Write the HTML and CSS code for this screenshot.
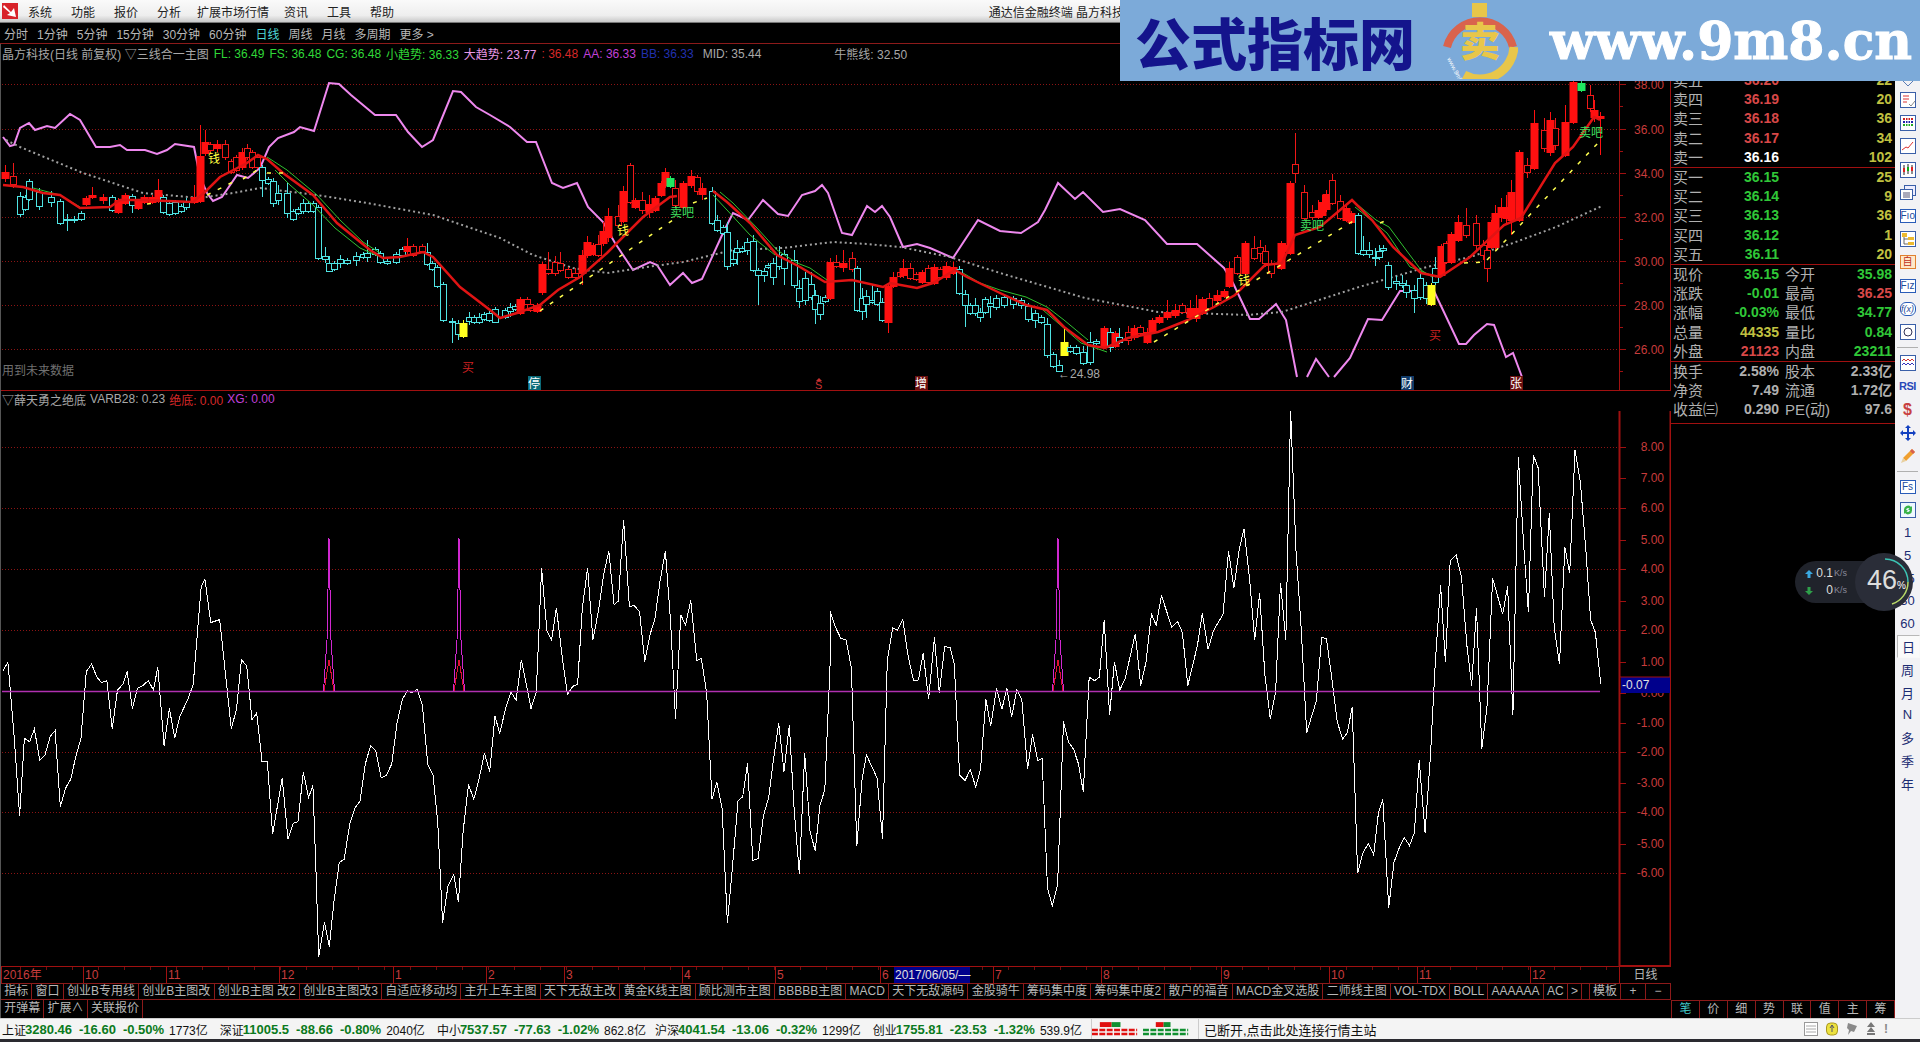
FILE: index.html
```html
<!DOCTYPE html>
<html lang="zh-CN">
<head>
    <meta charset="UTF-8">
    <title>通达信金融终端 晶方科技</title>
    <link rel="stylesheet" href="styles.css">
</head>
<body>
    <header class="menubar">
        <svg class="app-logo" viewBox="0 0 16 16">
            <rect width="16" height="16" fill="#d8232a"/>
            <path d="M2 2 L9 9 L12 5 L14 14 L5 12 L8 10 L1 4 Z" fill="#fff"/>
        </svg>
        <span>系统</span><span>功能</span><span>报价</span><span>分析</span><span class="menu-long">扩展市场行情</span><span>资讯</span><span>工具</span><span>帮助</span>
        <span class="app-title">通达信金融终端 晶方科技</span>
    </header>

    <nav class="periods">
        <span>分时</span><span>1分钟</span><span>5分钟</span><span>15分钟</span><span>30分钟</span><span>60分钟</span><span class="on">日线</span><span>周线</span><span>月线</span><span>多周期</span><span>更多 &gt;</span>
    </nav>

    <div class="workspace">
        <div class="left">
            <section class="pane pane-top">
                <div class="info">
                    <span class="grey">晶方科技(日线 前复权) ▽三线合一主图</span>
                    <span class="green">FL: 36.49</span>
                    <span class="green">FS: 36.48</span>
                    <span class="green">CG: 36.48</span>
                    <span class="green">小趋势: 36.33</span>
                    <span class="pink">大趋势: 23.77</span>
                    <span class="red">: 36.48</span>
                    <span class="violet">AA: 36.33</span>
                    <span class="blue">BB: 36.33</span>
                    <span class="grey mid">MID: 35.44</span>
                    <span class="grey far">牛熊线: 32.50</span>
                </div>
                <svg id="priceChart" class="chart" viewBox="0 63 1671 328" width="1671" height="328"></svg>
            </section>
            <section class="pane pane-bottom">
                <div class="info">
                    <span class="grey">▽薛天勇之绝底</span>
                    <span class="grey">VARB28: 0.23</span>
                    <span class="red">绝底: 0.00</span>
                    <span class="violet">XG: 0.00</span>
                </div>
                <svg id="indicatorChart" class="chart" viewBox="0 411 1671 556" width="1671" height="556"></svg>
            </section>
            <div class="date-row">
                <svg id="dateAxis" viewBox="0 967 1620 16" width="1620" height="16"></svg>
                <div class="date-cell">日线</div>
            </div>
            <div class="tabs">
                <span>指标</span><span>窗口</span><span>创业B专用线</span><span>创业B主图改</span><span>创业B主图 改2</span><span>创业B主图改3</span><span>自适应移动均</span><span>主升上车主图</span><span>天下无敌主改</span><span>黄金K线主图</span><span>顾比测市主图</span><span>BBBBB主图</span><span>MACD</span><span>天下无敌源码</span><span>金股骑牛</span><span>筹码集中度</span><span>筹码集中度2</span><span>散户的福音</span><span>MACD金叉选股</span><span>二师线主图</span><span>VOL-TDX</span><span>BOLL</span><span>AAAAAA</span><span>AC</span><span>&gt;</span>
                <span class="tab-push">模板</span><span class="tab-small">+</span><span class="tab-small">−</span>
            </div>
            <div class="tabs tabs-sub">
                <span>开弹幕</span><span>扩展∧</span><span>关联报价</span>
            </div>
        </div>

        <aside class="quote">
            <div class="q-block q-first">
                <div class="q-row"><b class="lab">卖五</b><i class="red">36.20</i><em class="yel">22</em></div>
                <div class="q-row"><b class="lab">卖四</b><i class="red">36.19</i><em class="yel">20</em></div>
                <div class="q-row"><b class="lab">卖三</b><i class="red">36.18</i><em class="yel">36</em></div>
                <div class="q-row"><b class="lab">卖二</b><i class="red">36.17</i><em class="yel">34</em></div>
                <div class="q-row"><b class="lab">卖一</b><i class="white">36.16</i><em class="yel">102</em></div>
            </div>
            <div class="q-block">
                <div class="q-row"><b class="lab">买一</b><i class="grn">36.15</i><em class="yel">25</em></div>
                <div class="q-row"><b class="lab">买二</b><i class="grn">36.14</i><em class="yel">9</em></div>
                <div class="q-row"><b class="lab">买三</b><i class="grn">36.13</i><em class="yel">36</em></div>
                <div class="q-row"><b class="lab">买四</b><i class="grn">36.12</i><em class="yel">1</em></div>
                <div class="q-row"><b class="lab">买五</b><i class="grn">36.11</i><em class="yel">20</em></div>
            </div>
            <div class="q-block">
                <div class="q-row"><b class="lab">现价</b><i class="grn">36.15</i><b class="lab2">今开</b><em class="grn">35.98</em></div>
                <div class="q-row"><b class="lab">涨跌</b><i class="grn">-0.01</i><b class="lab2">最高</b><em class="red">36.25</em></div>
                <div class="q-row"><b class="lab">涨幅</b><i class="grn">-0.03%</i><b class="lab2">最低</b><em class="grn">34.77</em></div>
                <div class="q-row"><b class="lab">总量</b><i class="yel">44335</i><b class="lab2">量比</b><em class="grn">0.84</em></div>
                <div class="q-row"><b class="lab">外盘</b><i class="red">21123</i><b class="lab2">内盘</b><em class="grn">23211</em></div>
            </div>
            <div class="q-block q-last">
                <div class="q-row"><b class="lab">换手</b><i class="sil">2.58%</i><b class="lab2">股本</b><em class="sil">2.33亿</em></div>
                <div class="q-row"><b class="lab">净资</b><i class="sil">7.49</i><b class="lab2">流通</b><em class="sil">1.72亿</em></div>
                <div class="q-row"><b class="lab">收益㈢</b><i class="sil">0.290</i><b class="lab2">PE(动)</b><em class="sil">97.6</em></div>
            </div>
            <div class="q-tabs">
                <span class="on">笔</span><span>价</span><span>细</span><span>势</span><span>联</span><span>值</span><span>主</span><span>筹</span>
            </div>
        </aside>

        <aside class="sidebar">
            <div class="side-top"><svg viewBox="0 0 16 10" width="16" height="10"><path d="M1 1 L8 8 L15 1" fill="none" stroke="#5b7db5"/></svg></div>
            <div class="side-item"><svg viewBox="0 0 16 16"><rect x=".5" y=".5" width="15" height="15" fill="#fff" stroke="#3a5fa8"/><path d="M3 4h6M3 7h6M3 10h4" stroke="#d33"/><path d="M9 12l2 2 4-5" fill="none" stroke="#888"/></svg></div>
            <div class="side-item"><svg viewBox="0 0 16 16"><rect x=".5" y=".5" width="15" height="15" fill="#fff" stroke="#3a5fa8"/><path d="M3 3h10v2H3z" fill="#c22"/><path d="M3 6h10v2H3z" fill="#22a"/><path d="M3 9h10v2H3z" fill="#2a2"/><path d="M5.500 3v9M8 3v9M10.500 3v9" stroke="#fff"/></svg></div>
            <div class="side-item"><svg viewBox="0 0 16 16"><rect x=".5" y=".5" width="15" height="15" fill="#fff" stroke="#3a5fa8"/><path d="M2 12l4-3 2 1 5-6" fill="none" stroke="#d33"/></svg></div>
            <div class="side-item"><svg viewBox="0 0 16 16"><rect x=".5" y=".5" width="15" height="15" fill="#fff" stroke="#3a5fa8"/><path d="M4 3v10M8 2v10M12 3v9" stroke="#222"/><path d="M3 6h2v4H3zM11 5h2v4h-2z" fill="#d22"/><path d="M7 5h2v4H7z" fill="#1a1"/></svg></div>
            <div class="side-item"><svg viewBox="0 0 16 16"><rect x="4.500" y=".5" width="11" height="10" fill="#eef" stroke="#3a5fa8"/><rect x=".5" y="4.500" width="12" height="10" fill="#fff" stroke="#3a5fa8"/><path d="M3 8h7M3 10h7M3 12h7" stroke="#557"/></svg></div>
            <div class="side-item"><span class="side-box">Fıo</span></div>
            <div class="side-item"><svg viewBox="0 0 16 16"><rect x=".5" y=".5" width="15" height="15" fill="#fff" stroke="#3a5fa8"/><rect x="2" y="2" width="5" height="4" fill="#ecb92e"/><rect x="8" y="6" width="6" height="3" fill="#ecb92e"/><rect x="8" y="11" width="6" height="3" fill="#ecb92e"/><path d="M4 6v7h4M4 8h4" fill="none" stroke="#666"/></svg></div>
            <div class="side-item"><span class="side-box side-self">自</span></div>
            <div class="side-item"><span class="side-box">Fız</span></div>
            <div class="side-item"><span class="side-box side-fx">f(x)</span></div>
            <div class="side-item"><svg viewBox="0 0 16 16"><rect x=".5" y=".5" width="15" height="15" fill="#fff" stroke="#3a5fa8"/><circle cx="8" cy="8" r="4" fill="none" stroke="#335"/></svg></div>
            <div class="side-sep"></div>
            <div class="side-item"><svg viewBox="0 0 16 16"><rect x=".5" y=".5" width="15" height="15" fill="#fff" stroke="#3a5fa8"/><path d="M2 6l2-2 2 2 2-2 2 2 2-2 2 2" fill="none" stroke="#c33"/><path d="M2 10l2-2 2 2 2-2 2 2 2-2 2 2" fill="none" stroke="#33b"/></svg></div>
            <div class="side-item"><span class="side-rsi">RSI</span></div>
            <div class="side-item"><span class="side-dollar">$</span></div>
            <div class="side-item"><svg viewBox="0 0 16 16"><path d="M8 0l3 3H9v4h4V5l3 3-3 3V9H9v4h2l-3 3-3-3h2V9H3v2L0 8l3-3v2h4V3H5z" fill="#1340c0"/></svg></div>
            <div class="side-item"><svg viewBox="0 0 16 16"><path d="M12 1l3 3-9 9-3-3z" fill="#f0a030"/><path d="M3 10l3 3-5 2z" fill="#e8d0a0"/><path d="M12 1l3 3-2 2-3-3z" fill="#d86050"/></svg></div>
            <div class="side-sep"></div>
            <div class="side-item tight"><span class="side-box">Fs</span></div>
            <div class="side-item tight"><svg viewBox="0 0 16 16"><rect x=".5" y=".5" width="15" height="15" fill="#eef8ff" stroke="#3a5fa8"/><path d="M4 8a4 4 0 0 1 7-3l1-1v4H8l1.500-1.500A2.500 2.500 0 0 0 6 8zM12 8a4 4 0 0 1-7 3l-1 1V8h4l-1.500 1.500A2.500 2.500 0 0 0 10 8z" fill="#39b34a"/></svg></div>
            <div class="side-item tight">1</div>
            <div class="side-item tight">5</div>
            <div class="side-item tight">15</div>
            <div class="side-item tight">30</div>
            <div class="side-item tight">60</div>
            <div class="side-item tight side-active">日</div>
            <div class="side-item tight">周</div>
            <div class="side-item tight">月</div>
            <div class="side-item tight">N</div>
            <div class="side-item tight">多</div>
            <div class="side-item tight">季</div>
            <div class="side-item tight">年</div>
        </aside>
    </div>

    <footer class="statusbar">
        <div class="st-group"><span>上证</span><b>3280.46</b><b>-16.60</b><b>-0.50%</b><span class="st-amt">1773亿</span></div>
        <div class="st-group"><span>深证</span><b>11005.5</b><b>-88.66</b><b>-0.80%</b><span class="st-amt">2040亿</span></div>
        <div class="st-group st-tight"><span>中小</span><b>7537.57</b><b>-77.63</b><b>-1.02%</b><span class="st-amt">862.8亿</span></div>
        <div class="st-group"><span>沪深</span><b>4041.54</b><b>-13.06</b><b>-0.32%</b><span class="st-amt">1299亿</span></div>
        <div class="st-group"><span>创业</span><b>1755.81</b><b>-23.53</b><b>-1.32%</b><span class="st-amt">539.9亿</span></div>
        <svg class="st-bars" viewBox="0 0 108 20" width="108" height="20">
            <rect x="8" y="3" width="12" height="5" fill="#e01010"/><rect x="20" y="3" width="9" height="5" fill="#109030"/>
            <path d="M0 11h46M0 15h46" stroke="#e01010" stroke-width="2.500" stroke-dasharray="6 1.500"/>
            <rect x="65" y="3" width="8" height="5" fill="#e01010"/><rect x="73" y="3" width="7" height="5" fill="#109030"/>
            <path d="M52 11h46M52 15h46" stroke="#109030" stroke-width="2.500" stroke-dasharray="6 1.500"/>
        </svg>
        <span class="st-msg">已断开,点击此处连接行情主站</span>
        <div class="st-icons">
            <svg viewBox="0 0 14 14" width="14" height="14"><rect x=".5" y=".5" width="13" height="13" fill="#fff" stroke="#999"/><path d="M2 4h10M2 7h10M2 10h10" stroke="#aaa"/></svg>
            <svg viewBox="0 0 12 14" width="12" height="14"><rect x=".5" y="1" width="11" height="12" rx="4" fill="#ece240" stroke="#aa9820"/><path d="M6 3v7M4 6l2-3 2 3" fill="none" stroke="#556"/></svg>
            <svg viewBox="0 0 12 14" width="12" height="14"><path d="M2 1l9 3-3 6-3-1-3 4 1-5-2-2z" fill="#8a8a8a"/></svg>
            <svg viewBox="0 0 10 14" width="10" height="14"><path d="M5 0l4 5H1zM5 5l4 5H1z" fill="#777"/><rect x="1" y="11" width="8" height="2" fill="#777"/></svg>
            <span class="st-bang">!</span>
        </div>
    </footer>
    <div class="bottom-edge"></div>

    <!-- watermark strip sits over the top of the window -->
    <div class="banner">
        <span class="banner-cn">公式指标网</span>
        <svg class="banner-logo" viewBox="0 0 76 76" width="76" height="76">
            <path d="M5 44 A34 34 0 0 1 71 44" fill="none" stroke="#d9634d" stroke-width="8"/>
            <path d="M72 44 A34 34 0 0 1 22 72" fill="none" stroke="#e8c64a" stroke-width="9"/>
            <rect x="30" y="0" width="15" height="14" fill="#e8c64a"/>
            <text x="38" y="53" class="banner-glyph">卖</text>
            <text x="5" y="56" class="banner-tiny" transform="rotate(62 5 56)">www.9m8.cn</text>
        </svg>
        <span class="banner-url">www.9m8.cn</span>
    </div>

    <!-- floating net speed widget -->
    <div class="speed">
        <div class="speed-row"><svg viewBox="0 0 8 8" width="8" height="8"><path d="M4 0l4 4H5.500v4h-3V4H0z" fill="#3aa8e0"/></svg><b>0.1</b><small>K/s</small></div>
        <div class="speed-row"><svg viewBox="0 0 8 8" width="8" height="8"><path d="M4 8L0 4h2.500V0h3v4H8z" fill="#2ea04a"/></svg><b>0</b><small>K/s</small></div>
        <div class="speed-dial">
            <svg viewBox="0 0 58 58" width="58" height="58">
                <path d="M30 6 A23 23 0 0 1 53 29" fill="none" stroke="#3cc4b4" stroke-width="1.500"/>
                <path d="M53 29 A23 23 0 0 1 37 51" fill="none" stroke="#b8d868" stroke-width="1.500"/>
            </svg>
            <span class="speed-num">46<small>%</small></span>
        </div>
    </div>

    <script src="chart.js"></script>
</body>
</html>
```

FILE: styles.css
```css
* {
    margin: 0;
    padding: 0;
    box-sizing: border-box;
}

body {
    width: 1920px;
    height: 1042px;
    overflow: hidden;
    background: #000;
    display: flex;
    flex-direction: column;
    position: relative;
    font-family: "Liberation Sans", "Noto Sans CJK SC", sans-serif;
    font-size: 12px;
    color: #b8b8b8;
}

/* top menu */
.menubar {
    height: 23px;
    flex: none;
    display: flex;
    align-items: center;
    gap: 19px;
    padding-left: 2px;
    background: linear-gradient(#fafafa, #eeeeee 70%, #c8c8c8);
    color: #222;
    border-bottom: 1px solid #777;
}

.app-logo {
    width: 16px;
    height: 16px;
    margin-right: -9px;
}

.menu-long {
    margin: 0 -4px 0 -3px;
}

.app-title {
    margin-left: auto;
    padding-right: 796px;
}

.periods {
    height: 21px;
    flex: none;
    display: flex;
    align-items: center;
    gap: 9px;
    padding-left: 4px;
    border-bottom: 1px solid #8c1a1a;
}

.periods .on {
    color: #4fd8d8;
}

/* main area */
.workspace {
    height: 974px;
    flex: none;
    display: flex;
}

.left {
    width: 1671px;
    flex: none;
    display: flex;
    flex-direction: column;
    border-left: 1px solid #555;
}

.pane {
    flex: none;
    overflow: hidden;
}

.pane-top {
    height: 347px;
    border-bottom: 1px solid #a01010;
}

.pane-bottom {
    height: 576px;
}

.info {
    height: 19px;
    display: flex;
    align-items: center;
    gap: 5px;
    padding-left: 1px;
    white-space: nowrap;
}

.pane-bottom .info {
    height: 20px;
    gap: 4px;
    padding: 0 0 4px 1px;
}

.info .mid {
    margin-left: 4px;
}

.info .far {
    margin-left: 68px;
}

.grey { color: #a8a8a8; }
.green { color: #30d838; }
.pink { color: #e898e8; }
.red { color: #d62828; }
.violet { color: #c040d8; }
.blue { color: #2030b0; }

.chart {
    display: block;
    margin-left: -1px;
}

/* jagged lines like the real terminal */
#indicatorChart polyline {
    shape-rendering: crispEdges;
}

/* date axis and tab rows */
.date-row {
    height: 16px;
    flex: none;
    display: flex;
    margin-left: -1px;
}

.date-row svg {
    display: block;
}

.date-cell {
    width: 51px;
    text-align: center;
    line-height: 16px;
}

.tabs {
    height: 17px;
    flex: none;
    display: flex;
    border-top: 1px solid #8c1a1a;
    border-bottom: 1px solid #8c1a1a;
    line-height: 15px;
    white-space: nowrap;
}

.tabs span {
    padding: 0 3.2px;
    border-right: 1px solid #8c1a1a;
}

.tabs .tab-push {
    margin-left: auto;
    border-left: 1px solid #8c1a1a;
    padding: 0 3px;
}

.tabs .tab-small {
    width: 25px;
    padding: 0;
    text-align: center;
}

.tabs-sub {
    height: 18px;
    border-top: none;
    border-bottom: none;
    line-height: 17px;
}

/* order book */
.quote {
    width: 224px;
    flex: none;
    display: flex;
    flex-direction: column;
}

.q-block {
    height: 97px;
    flex: none;
    border-bottom: 1px solid #a01010;
}

.q-first {
    margin-top: 27px;
}

.q-last {
    height: 62px;
}

.q-row {
    height: 19.2px;
    display: grid;
    grid-template-columns: 44px 62px 50px 1fr;
    padding: 0 3px 0 2px;
    align-items: center;
    line-height: 19px;
    white-space: nowrap;
}

.q-row b.lab,
.q-row b.lab2 {
    font-weight: 400;
    font-size: 15px;
    color: #b0b0b0;
}

.q-row b.lab2 {
    padding-left: 6px;
}

.q-row i,
.q-row em {
    font-style: normal;
    font-weight: 700;
    font-size: 14px;
    text-align: right;
}

.q-row em {
    grid-column: 4;
}

.q-row .red { color: #d84848; }
.q-row .grn { color: #30c838; }
.q-row .yel { color: #c0c040; }
.q-row .white { color: #fff; }
.q-row .sil { color: #b0b0b0; }

.q-tabs {
    margin-top: auto;
    height: 18px;
    display: flex;
    border-top: 1px solid #8c1a1a;
    border-left: 1px solid #8c1a1a;
}

.q-tabs span {
    width: 28px;
    text-align: center;
    line-height: 17px;
    border-right: 1px solid #8c1a1a;
}

.q-tabs .on {
    color: #40c8c8;
}

/* right toolbar */
.sidebar {
    width: 25px;
    flex: none;
    padding-top: 34px;
    background: #f2f2f5;
    color: #1c2c72;
    font-size: 13px;
}

.side-top {
    height: 10.5px;
    text-align: center;
    line-height: 0;
}

.side-item {
    height: 23.2px;
    display: flex;
    align-items: center;
    justify-content: center;
}

.side-item.tight {
    height: 22.8px;
}

.side-item svg {
    width: 16px;
    height: 16px;
}

.side-sep {
    height: 1px;
    margin: 3px 2px 4px;
    background: #b0b0b0;
}

.side-box {
    width: 16px;
    height: 14px;
    border: 1px solid #2a5cb8;
    background: #fff;
    font-size: 10px;
    line-height: 12px;
    text-align: center;
    color: #1d4a9c;
}

.side-self {
    background: #ffe8c8;
    border-color: #e08030;
    color: #c03020;
}

.side-fx {
    border-radius: 6px;
    font-style: italic;
    font-size: 9px;
}

.side-rsi {
    font-size: 11px;
    font-weight: 700;
    color: #2848b8;
    letter-spacing: -0.5px;
}

.side-dollar {
    font-size: 16px;
    font-weight: 700;
    color: #c84040;
}

.side-active {
    border: 1px solid #b8b8b8;
    border-right-color: #f8f8f8;
    border-bottom-color: #f8f8f8;
    background: #fafafa;
    margin-left: 2px;
}

/* status bar */
.statusbar {
    height: 21px;
    flex: none;
    display: flex;
    align-items: center;
    background: #f4f4f4;
    border-top: 1px solid #ccc;
    color: #111;
    padding-left: 2px;
    white-space: nowrap;
}

.st-group {
    display: flex;
    align-items: center;
    gap: 7px;
    margin-right: 12px;
}

.st-tight {
    margin-right: 9px;
}

.st-group span:first-child {
    margin-right: -8px;
}

.st-group b {
    font-size: 13px;
    color: #0a7a20;
}

.st-group .st-amt {
    margin-left: -2px;
    font-size: 12px;
}

.st-bars {
    flex: none;
    margin-left: -3px;
    padding: 0;
    border-left: 1px solid #ccc;
    border-right: 1px solid #ccc;
}

.st-msg {
    margin-left: 5px;
    font-size: 13px;
}

.st-icons {
    margin-left: auto;
    margin-right: 32px;
    display: flex;
    align-items: center;
    gap: 8px;
}

.st-bang {
    font-weight: 700;
    color: #888;
}

.bottom-edge {
    height: 3px;
    flex: none;
    background: #2a2a30;
}

/* watermark strip */
.banner {
    position: absolute;
    left: 1120px;
    top: 0;
    width: 800px;
    height: 81px;
    background: #7caad9;
    display: flex;
    align-items: center;
}

.banner-cn {
    margin-left: 15px;
    width: 307px;
    font-family: "Noto Sans CJK SC", sans-serif;
    font-size: 56px;
    font-weight: 900;
    line-height: 1;
    color: #14148c;
    white-space: nowrap;
}

.banner-logo {
    flex: none;
}

.banner-glyph {
    font-family: "Noto Sans CJK SC", sans-serif;
    font-size: 40px;
    font-weight: 900;
    fill: #e8c64a;
    text-anchor: middle;
}

.banner-tiny {
    font-size: 6px;
    fill: #fff;
}

.banner-url {
    margin-left: 32px;
    font-family: "DejaVu Serif", serif;
    font-size: 52px;
    font-weight: 700;
    -webkit-text-stroke: 1px #fff;
    color: #fff;
    white-space: nowrap;
}

/* net speed widget */
.speed {
    position: absolute;
    left: 1795px;
    top: 561px;
    width: 90px;
    height: 42px;
    padding: 4px 0 0 10px;
    border-radius: 21px;
    background: #20232b;
    color: #ddd;
    font-size: 10px;
}

.speed-row {
    display: grid;
    grid-template-columns: 9px 20px 1fr;
    height: 17px;
    line-height: 17px;
    align-items: center;
}

.speed-row b {
    font-weight: 400;
    font-size: 12px;
    text-align: right;
    padding-right: 1px;
}

.speed-row small {
    font-size: 9px;
    color: #889;
}

.speed-dial {
    position: absolute;
    left: 60px;
    top: -8px;
    width: 58px;
    height: 58px;
    border-radius: 50%;
    background: #2a2d38;
}

.speed-dial svg {
    position: absolute;
    left: 0;
    top: 0;
}

.speed-num {
    position: absolute;
    left: 12px;
    top: 11px;
    font-size: 27px;
    font-weight: 400;
    line-height: 32px;
    color: #ddd;
}

.speed-num small {
    font-size: 10px;
    color: #fff;
}
```

FILE: chart.js
```js
// x, body top, body bottom, type, wick top, wick bottom (all page pixels)
// R solid red, H hollow red, C hollow cyan, Y yellow, G green
const candles = [
    [5,172,178,'R',165,182],[13,176,184,'H',163,188],[20,196,214,'C',192,217],[25,197,209,'C'],[29,181,199,'C'],[39,192,206,'C',188,210],[51,197,202,'C',191,207],[60,201,223,'C'],[67,219,220,'C',214,231],[74,219,220,'C',216,223],[81,213,219,'C'],
    [86,198,204,'R'],[92,195,197,'R',187,199],[103,197,200,'R',194,204],[112,197,210,'C'],[118,200,212,'R'],[125,195,203,'R'],[132,196,205,'C',194,213],[138,201,208,'R'],[144,197,202,'R'],[152,197,202,'R'],[158,190,201,'R',179,203],
    [163,197,212,'C'],[169,203,214,'C'],[175,202,213,'C'],[181,206,211,'C'],[186,202,207,'C',198,210],[194,197,202,'R',185,204],[200,156,201,'R',125,203],[205,142,153,'R',130,156],[210,144,150,'H'],[217,144,148,'R',140,152],[225,144,157,'H',140,160],[231,161,172,'H'],[236,157,170,'H'],[242,152,167,'R',148,170],[247,148,157,'H',144,160],[252,152,167,'H'],[257,157,167,'H'],
    [262,167,180,'C',165,197],[268,179,183,'C'],[273,181,203,'C',178,207],[278,193,200,'C',185,205],[287,193,213,'C',183,218],[293,211,219,'C'],[298,209,213,'C'],[303,203,211,'C',199,214],[308,203,211,'C'],[313,203,211,'C'],[318,207,258,'C'],[325,256,259,'C',247,263],[329,263,271,'C',256,272],[334,263,269,'C'],[340,259,263,'C',255,268],[347,260,263,'C'],[356,256,260,'C',252,266],[363,254,257,'C'],[367,253,257,'C',240,262],[375,249,254,'C'],[380,253,262,'C'],[387,261,263,'C',258,265],[396,254,262,'C'],[402,249,255,'C'],
    [407,246,251,'R',238,254],[413,246,255,'H'],[422,246,251,'H'],[427,252,264,'C',243,266],[432,263,269,'C'],[437,267,286,'C'],[443,284,320,'C'],[452,321,322,'C',318,343],[458,323,334,'C',320,340],[463,323,336,'Y',320,338],[469,317,321,'C',312,325],[474,317,322,'C'],[479,317,322,'C',313,324],[484,314,319,'C'],[489,313,320,'C'],[495,309,322,'C',307,323],
    [505,310,317,'C'],[510,307,311,'C',303,317],[515,306,309,'C'],[520,299,313,'R'],[527,299,304,'H'],[530,304,310,'H'],[537,305,311,'R'],[542,264,292,'R',262,295],[548,269,273,'H',252,275],[555,262,273,'H',256,276],[560,263,270,'H',252,272],[568,269,277,'H'],[575,273,277,'H',268,280],[582,255,273,'R',250,285],[587,242,255,'R',236,258],[593,245,254,'R'],[598,244,255,'H',235,257],[603,231,243,'R',222,246],[608,216,237,'R',208,242],[618,216,225,'H',205,228],[623,191,221,'R',186,223],[630,165,202,'H'],[635,200,207,'R'],[642,200,210,'H',192,214],[649,204,212,'R',195,218],[655,198,210,'R'],[661,183,195,'R'],[665,172,185,'R',168,188],[670,178,186,'G'],[675,188,205,'H',180,208],[683,183,207,'R'],[691,176,185,'R',170,188],[697,177,191,'H',175,195],[702,188,194,'R',183,200],
    [712,191,223,'C',187,225],[717,220,230,'C',215,232],[723,227,233,'C'],[727,232,266,'C',222,270],[733,259,263,'C',250,266],[737,248,252,'C',240,265],[742,248,251,'C'],[747,242,250,'C',238,255],[753,241,270,'C',235,272],[758,270,275,'C',268,305],[764,271,275,'C',268,282],[768,265,267,'C'],[773,263,277,'C',258,285],[779,255,266,'C',246,270],[784,254,268,'C',250,285],[794,260,285,'C',250,288],[799,288,301,'C',280,308],[805,278,300,'C',272,305],[811,284,297,'C',272,300],[815,295,309,'C',290,324],[820,303,314,'C',296,320],[825,297,301,'C'],
    [830,262,298,'R',258,300],[836,262,266,'H',255,268],[843,263,267,'R',250,272],[852,258,269,'H',252,272],[857,268,310,'C'],[862,298,311,'C',288,320],[866,296,304,'C',290,318],[872,300,302,'C',285,304],[877,291,304,'C',288,306],[882,302,320,'C',298,322],[888,286,322,'R',283,333],[893,277,286,'R',272,288],[900,272,276,'H'],[903,268,275,'R',259,278],[910,268,278,'H',263,280],[916,274,279,'H'],[922,272,282,'R'],[928,268,282,'H',265,284],[934,267,283,'R',264,285],[940,269,277,'H'],[946,266,277,'R',262,280],[953,267,273,'R',262,275],
    [959,269,293,'C',266,295],[965,294,305,'C',290,327],[970,305,313,'C'],[975,305,313,'C',298,316],[980,312,317,'C',308,322],[985,299,312,'C'],[990,303,306,'C',296,318],[996,298,307,'C',295,310],
    [1004,297,305,'C',294,308],[1013,298,304,'C',296,309],[1021,300,305,'C',298,309],[1028,306,319,'C',303,322],[1035,313,320,'C',310,328],[1041,317,322,'C'],[1047,324,355,'C',318,358],[1053,354,366,'C'],[1059,365,371,'C',360,372],[1064,342,355,'Y',328,356],[1070,347,351,'C'],[1076,347,353,'C'],[1083,352,363,'C',346,365],[1090,342,362,'C',332,365],[1096,341,343,'C'],
    [1104,328,346,'R',326,348],[1110,332,347,'C',328,352],[1115,333,346,'R'],[1119,337,342,'C',328,344],[1128,332,340,'H',326,345],[1134,328,337,'R',325,340],[1140,327,333,'H'],[1147,332,342,'R',328,344],[1152,320,332,'R'],[1159,317,322,'R'],[1167,312,317,'R',300,320],[1175,310,315,'R',304,318],[1182,305,312,'H'],[1190,308,317,'R',300,320],[1196,308,318,'R',295,322],[1202,299,313,'R'],[1209,298,308,'H',293,310],[1217,295,300,'R',290,303],[1224,291,296,'R'],[1229,268,286,'R',262,288],[1237,257,273,'H'],[1245,243,273,'R'],[1254,248,258,'H',236,260],[1260,247,253,'H',240,262],[1265,251,263,'H',245,267],[1271,264,273,'H',260,278],[1281,243,268,'R'],[1285,245,250,'R'],[1290,183,253,'R'],[1295,164,173,'H',133,183],[1304,192,218,'H',185,220],[1312,212,217,'H',205,220],[1318,210,217,'R',200,219],[1322,202,215,'R',195,217],[1326,194,209,'R',190,212],[1332,180,203,'H',174,205],[1340,201,218,'H',195,220],[1346,208,220,'R'],[1351,213,222,'R'],
    [1358,215,253,'C',213,255],[1363,250,254,'C',236,256],[1369,250,254,'C',242,258],[1375,257,258,'C',248,266],[1379,251,257,'C',245,260],[1383,248,250,'C',245,252],[1388,265,287,'C',262,290],[1396,281,283,'C',276,290],[1402,283,285,'C',275,288],[1406,285,292,'C',280,298],[1414,290,298,'C',285,313],[1420,278,297,'C',272,300],[1426,285,298,'C',282,304],[1431,285,304,'Y'],[1435,268,282,'C',257,285],
    [1441,246,275,'R'],[1446,243,262,'H'],[1451,234,262,'R'],[1458,222,240,'R',215,242],[1466,225,235,'H',208,238],[1476,223,245,'H',215,250],[1483,245,255,'H',240,260],[1487,250,268,'H',240,282],[1491,222,247,'R'],[1495,213,247,'R',205,250],[1501,207,217,'R',198,222],[1506,207,218,'R',195,225],[1511,192,220,'R',180,235],[1519,152,220,'R'],[1527,165,172,'H',158,178],[1534,123,168,'R',110,170],[1544,130,148,'H',118,152],[1550,120,152,'R',112,156],[1555,128,145,'H',118,150],[1565,122,155,'R',105,157],[1573,82,122,'R'],[1581,83,90,'G'],[1590,95,108,'H',85,112],[1594,110,117,'R',100,122],[1600,116,118,'R',112,155]
];

const pinkLine = [
    [[3,137],[10,146],[14,145],[20,128],[29,123],[35,130],[47,126],[55,128],[70,114],[80,120],[96,147],[110,147],[120,145],[127,150],[145,150],[157,154],[167,150],[175,144],[194,147],[200,177],[207,193],[213,201],[222,197],[237,175],[248,178],[260,168],[269,147],[278,138],[294,132],[300,127],[314,131],[329,83],[339,84],[351,95],[375,115],[396,115],[408,132],[422,147],[433,140],[453,91],[461,92],[476,107],[490,115],[510,127],[527,142],[536,142],[552,183],[563,188],[577,183],[588,207],[603,222],[615,243],[633,270],[650,262],[657,265],[670,285],[683,273],[692,283],[702,279],[723,233],[733,213],[748,220],[763,200],[778,214],[788,216],[802,195],[815,191],[822,185],[828,193],[842,233],[852,235],[867,206],[875,212],[882,206],[890,217],[903,247],[917,244],[930,248],[953,258],[978,220],[1000,231],[1021,233],[1038,222],[1045,210],[1058,183],[1075,199],[1083,192],[1103,212],[1120,209],[1145,220],[1167,244],[1197,244],[1224,268],[1233,283],[1250,319],[1259,319],[1276,304],[1286,320],[1297,377]],
    [[1307,377],[1316,359],[1329,377]],
    [[1334,377],[1350,358],[1368,319],[1382,320],[1400,291],[1434,291],[1459,344],[1466,344],[1474,335],[1487,324],[1494,325],[1506,357],[1513,353],[1522,377]]
];

const dotLine = [[6,140],[20,147],[83,173],[143,193],[200,198],[233,193],[260,188],[317,195],[367,203],[433,215],[500,238],[533,255],[573,268],[607,273],[640,268],[683,262],[733,250],[783,248],[833,242],[867,244],[900,247],[950,257],[1000,273],[1085,298],[1158,312],[1248,315],[1282,312],[1359,287],[1427,267],[1470,257],[1513,243],[1556,227],[1602,206]];

const redLine = [[3,185],[23,187],[43,193],[60,195],[80,208],[110,207],[120,200],[147,200],[167,201],[193,202],[205,192],[220,177],[247,163],[258,155],[267,159],[283,173],[313,195],[337,223],[370,250],[383,258],[400,257],[423,252],[433,257],[460,287],[490,310],[500,318],[517,313],[540,305],[558,290],[580,277],[607,253],[643,217],[670,197],[677,196]];
const redLine2 = [[713,191],[727,202],[750,223],[777,255],[800,267],[825,282],[852,280],[883,287],[890,283],[917,288],[933,283],[955,270],[967,277],[1000,293],[1026,305],[1047,310],[1064,327],[1088,345],[1105,348],[1128,338],[1158,332],[1188,320],[1214,307],[1235,295],[1265,265],[1282,263],[1295,235],[1320,227],[1352,200],[1372,220],[1393,247],[1421,273],[1440,277],[1470,257],[1504,225],[1521,218],[1555,163],[1573,147],[1594,117],[1600,120]];

const greenLines = [
    [[33,188],[60,195],[80,207]],
    [[267,157],[287,170],[317,195],[340,220],[363,242],[380,253]],
    [[275,170],[290,185],[313,205],[335,228],[360,248],[378,256]],
    [[720,192],[733,203],[757,228],[777,250],[797,263],[810,268],[827,280]],
    [[713,195],[727,210],[750,235],[775,255]],
    [[963,273],[980,283],[1000,290],[1026,297],[1047,307],[1064,320],[1088,340]],
    [[1043,310],[1081,343],[1107,352]],
    [[1352,200],[1376,220],[1389,227],[1421,270],[1432,277]],
    [[1355,207],[1387,233],[1410,267],[1436,277]]
];

const yellowDashes = [
    [[147,204],[157,203]],[[207,195],[233,182]],[[243,179],[257,170]],[[267,173],[283,173]],
    [[540,311],[673,220]],[[693,203],[707,198]],[[1154,342],[1355,220]],[[1380,223],[1385,221]],[[1464,263],[1484,262]],[[1487,260],[1598,143]]
];

// lower pane, read off the two crops of the picture
const leftTrace = [5,760,15,735,27,940,37,1150,46,940,56,950,65,915,75,1000,85,985,95,935,104,920,114,1125,124,1075,134,1050,143,990,153,940,163,760,173,740,183,775,192,790,202,785,212,915,222,810,232,795,240,760,250,860,260,805,270,798,280,785,290,810,298,748,310,960,320,860,330,940,340,880,355,835,365,795,380,530,387,510,398,628,415,620,427,780,437,915,447,860,456,728,466,745,476,890,485,872,495,1003,505,1003,515,1200,533,1048,544,1212,554,1170,563,1165,573,1032,583,1100,591,1068,597,1300,602,1530,613,1437,622,1503,631,1380,641,1275,650,1268,661,1170,670,1130,680,1110,690,1010,700,960,710,975,720,1048,730,1040,740,1010,750,900,760,835,770,812,778,818,788,808,798,850,808,1010,818,1040,827,1170,836,1440,846,1340,857,1308,866,1382,875,1190,885,1065,895,1105,905,1050,915,980,925,1030,935,880,944,928,955,860,965,815,975,838,985,728,995,800,1003,860,1013,815,1023,482,1033,650,1042,675,1051,588,1062,720,1072,822,1082,800,1091,795,1100,590,1110,480,1120,675,1130,600,1140,500,1150,435,1160,580,1168,570,1178,350,1189,585,1198,582,1208,598,1218,733,1228,660,1237,620,1247,515,1257,435,1267,630,1276,888,1286,607,1295,635,1305,568,1316,730,1325,725,1335,820,1345,1105,1354,1058,1364,1130,1374,1440,1384,1280,1394,1110,1403,1098,1412,1008,1422,1270,1432,1265,1442,1150,1452,1100,1460,1010,1471,900,1481,1030,1491,905,1500,1130,1510,1308,1520,980,1530,1190,1540,1245,1549,1120,1558,1080,1568,740];
const rightTrace = [0,598,10,640,20,670,30,675,40,750,50,1232,60,1050,68,985,88,1048,98,1212,107,730,117,642,126,648,136,620,146,720,156,785,165,783,174,710,184,835,195,668,204,818,214,693,224,695,232,740,242,1040,252,1055,262,1025,272,1072,281,1025,291,835,300,908,311,805,321,862,330,805,339,882,349,810,358,835,369,1022,378,930,388,1000,396,995,406,1345,415,1392,425,1335,436,895,445,950,455,970,464,1010,473,1085,484,775,494,785,503,775,512,620,522,878,531,735,541,810,551,780,570,658,580,798,590,735,600,605,609,635,619,555,638,640,649,625,658,655,668,798,686,690,695,603,706,700,716,650,734,605,744,435,754,535,764,430,773,375,783,505,793,675,802,548,812,770,822,888,832,815,841,520,851,675,860,55,870,435,880,650,890,925,908,840,918,668,927,672,937,780,947,895,957,943,966,925,975,855,985,1305,995,1250,1005,1225,1015,1255,1024,1140,1032,1105,1043,1398,1053,1275,1063,1235,1072,1208,1082,1230,1091,1195,1100,1000,1111,1195,1121,990,1130,740,1140,527,1149,735,1158,462,1169,445,1179,505,1189,690,1198,798,1207,588,1217,970,1227,850,1237,508,1256,605,1265,530,1275,878,1285,180,1296,440,1304,600,1313,175,1322,210,1334,560,1343,332,1352,640,1362,740,1372,425,1381,495,1391,162,1401,250,1411,430,1420,620,1429,655,1439,795];

const DIM_RED = '#8c1414';
const AXIS_RED = '#a01010';
const LABEL_RED = '#c83c3c';

function poly(points, color, width, dash) {
    const d = points.map(p => p[0] + ',' + p[1]).join(' ');
    const dashAttr = dash ? ` stroke-dasharray="${dash}"` : '';
    return `<polyline points="${d}" fill="none" stroke="${color}" stroke-width="${width}"${dashAttr}/>`;
}

function line(x1, y1, x2, y2, color, width, dash) {
    const dashAttr = dash ? ` stroke-dasharray="${dash}"` : '';
    return `<line x1="${x1}" y1="${y1}" x2="${x2}" y2="${y2}" stroke="${color}" stroke-width="${width || 1}"${dashAttr}/>`;
}

function label(x, y, str, color, anchor, size) {
    return `<text x="${x}" y="${y}" fill="${color}" font-size="${size || 12}" text-anchor="${anchor || 'start'}" font-family="Liberation Sans, Noto Sans CJK SC, sans-serif">${str}</text>`;
}

function candle(c) {
    const [x, top, bot, type, wTop, wBot] = c;
    const colors = { R: '#ff1010', H: '#f01818', C: '#4fe4e4', Y: '#ffff20', G: '#20e860' };
    const color = colors[type];
    const solid = type !== 'H' && type !== 'C';
    const hi = wTop === undefined ? top - 2 : wTop;
    const lo = wBot === undefined ? bot + 2 : wBot;
    const w = solid ? 7 : 6;
    let s = line(x + .5, hi, x + .5, lo, color, 1);
    s += `<rect x="${x - w / 2 + .5}" y="${top + .5}" width="${w}" height="${Math.max(bot - top, 1)}" fill="${solid ? color : '#000'}" stroke="${color}"/>`;
    return s;
}

function drawPrice() {
    let s = '';
    const levels = [[84.5, '38.00'], [129.5, '36.00'], [173.5, '34.00'], [217.5, '32.00'], [261.5, '30.00'], [305.5, '28.00'], [349.5, '26.00']];
    levels.forEach(([y, str]) => {
        s += line(2, y, 1619, y, DIM_RED, 1, '1 2');
        s += line(1620, y, 1626, y, AXIS_RED);
        s += line(1620, y + 22, 1623, y + 22, AXIS_RED);
        s += label(1664, y + 4, str, LABEL_RED, 'end');
    });
    s += line(1619.5, 63, 1619.5, 391, AXIS_RED);
    s += line(1670.5, 63, 1670.5, 391, AXIS_RED);

    pinkLine.forEach(p => { s += poly(p, '#ee88ee', 2); });
    s += poly(dotLine, '#a0a0a0', 2, '2 3');
    candles.forEach(c => { s += candle(c); });
    greenLines.forEach(p => { s += poly(p, '#30c030', 1); });
    s += poly(redLine, '#e01414', 2.5);
    s += poly(redLine2, '#e01414', 2.5);
    yellowDashes.forEach(p => { s += poly(p, '#ffff50', 1.5, '4 8'); });

    const tags = [
        [208, 163, '钱', '#ffff40'], [617, 235, '钱', '#ffff40'], [1238, 285, '钱', '#ffff40'],
        [670, 217, '卖吧', '#40e060'], [1300, 230, '卖吧', '#40e060'], [1579, 137, '卖吧', '#40e060'],
        [462, 372, '买', '#d02020'], [1429, 340, '买', '#d02020']
    ];
    tags.forEach(t => { s += label(t[0], t[1], t[2], t[3]); });

    s += label(2, 375, '用到未来数据', '#707070');
    s += label(1058, 378, '←24.98', '#a8a8a8');

    // little flag labels along the bottom
    const flags = [[528, '停', '#0a6a78', '#fff'], [915, '增', '#6a1010', '#fff'], [1401, '财', '#103a68', '#fff'], [1510, '张', '#6a1010', '#fff']];
    flags.forEach(f => {
        s += `<rect x="${f[0]}" y="376" width="13" height="14" fill="${f[2]}"/>`;
        s += label(f[0], 388, f[1], f[3]);
    });
    s += label(815, 389, 'S', '#c83030', 'start', 11);
    s += '<path d="M819 378l-3 3h6z" fill="#c83030"/>';

    document.getElementById('priceChart').innerHTML = s;
}

function drawIndicator() {
    let s = '';
    const grid = [447, 508, 569, 630, 752, 812, 873];
    grid.forEach(y => { s += line(2, y + .5, 1619, y + .5, DIM_RED, 1, '1 2'); });

    const labels = [[447, '8.00'], [478, '7.00'], [508, '6.00'], [540, '5.00'], [569, '4.00'], [601, '3.00'], [630, '2.00'], [662, '1.00'], [693, '0.00'], [723, '-1.00'], [752, '-2.00'], [783, '-3.00'], [812, '-4.00'], [844, '-5.00'], [873, '-6.00']];
    labels.forEach(([y, str]) => {
        s += line(1620, y + .5, 1626, y + .5, AXIS_RED);
        s += label(1664, y + 4, str, LABEL_RED, 'end');
    });

    const white = [];
    for (let i = 0; i < leftTrace.length; i += 2) {
        white.push([(leftTrace[i] / 1.889).toFixed(1), (390 + leftTrace[i + 1] / 2.7).toFixed(1)]);
    }
    for (let i = 0; i < rightTrace.length; i += 2) {
        white.push([(830 + rightTrace[i] / 1.867).toFixed(1), (390 + rightTrace[i + 1] / 2.7).toFixed(1)]);
    }
    s += poly(white, '#ffffff', 1);

    s += line(2, 691.5, 1600, 691.5, '#b030b0', 1.5);
    [329, 459, 1058].forEach(x => {
        s += poly([[x - 5.5, 691], [x - 2, 640], [x, 538], [x + 2, 640], [x + 5.5, 691]], '#d028d0', 1);
        s += poly([[x - 5, 691], [x, 660], [x + 5, 691]], '#e01030', 1);
    });

    s += line(1619.5, 411, 1619.5, 967, AXIS_RED, 2);
    s += line(1670.5, 411, 1670.5, 967, AXIS_RED, 2);
    s += line(1620, 966, 1671, 966, AXIS_RED, 2);
    s += line(0, 966.5, 1620, 966.5, AXIS_RED, 1);

    s += `<rect x="1621" y="677" width="49" height="16" fill="#00008c"/>`;
    s += line(1620, 677, 1671, 677, AXIS_RED);
    s += label(1622, 689, '-0.07', '#e0e0e0');

    document.getElementById('indicatorChart').innerHTML = s;
}

function drawDates() {
    const months = [[3, '2016年'], [85, '10'], [168, '11'], [281, '12'], [395, '1'], [488, '2'], [566, '3'], [684, '4'], [777, '5'], [882, '6'], [995, '7'], [1103, '8'], [1223, '9'], [1331, '10'], [1419, '11'], [1532, '12']];
    let s = '';
    for (let x = 20; x < 1620; x += 26) {
        s += line(x + .5, 967, x + .5, 970, '#701010');
    }
    months.forEach(([x, str]) => {
        s += line(x - 1.5, 967, x - 1.5, 983, AXIS_RED);
        s += label(x, 979, str, LABEL_RED);
    });
    s += `<rect x="894" y="967" width="76" height="16" fill="#00008c"/>`;
    s += label(895, 979, '2017/06/05/—', '#e0e0e0');
    s += line(1619.5, 967, 1619.5, 983, AXIS_RED);
    document.getElementById('dateAxis').innerHTML = s;
}

drawPrice();
drawIndicator();
drawDates();
```
